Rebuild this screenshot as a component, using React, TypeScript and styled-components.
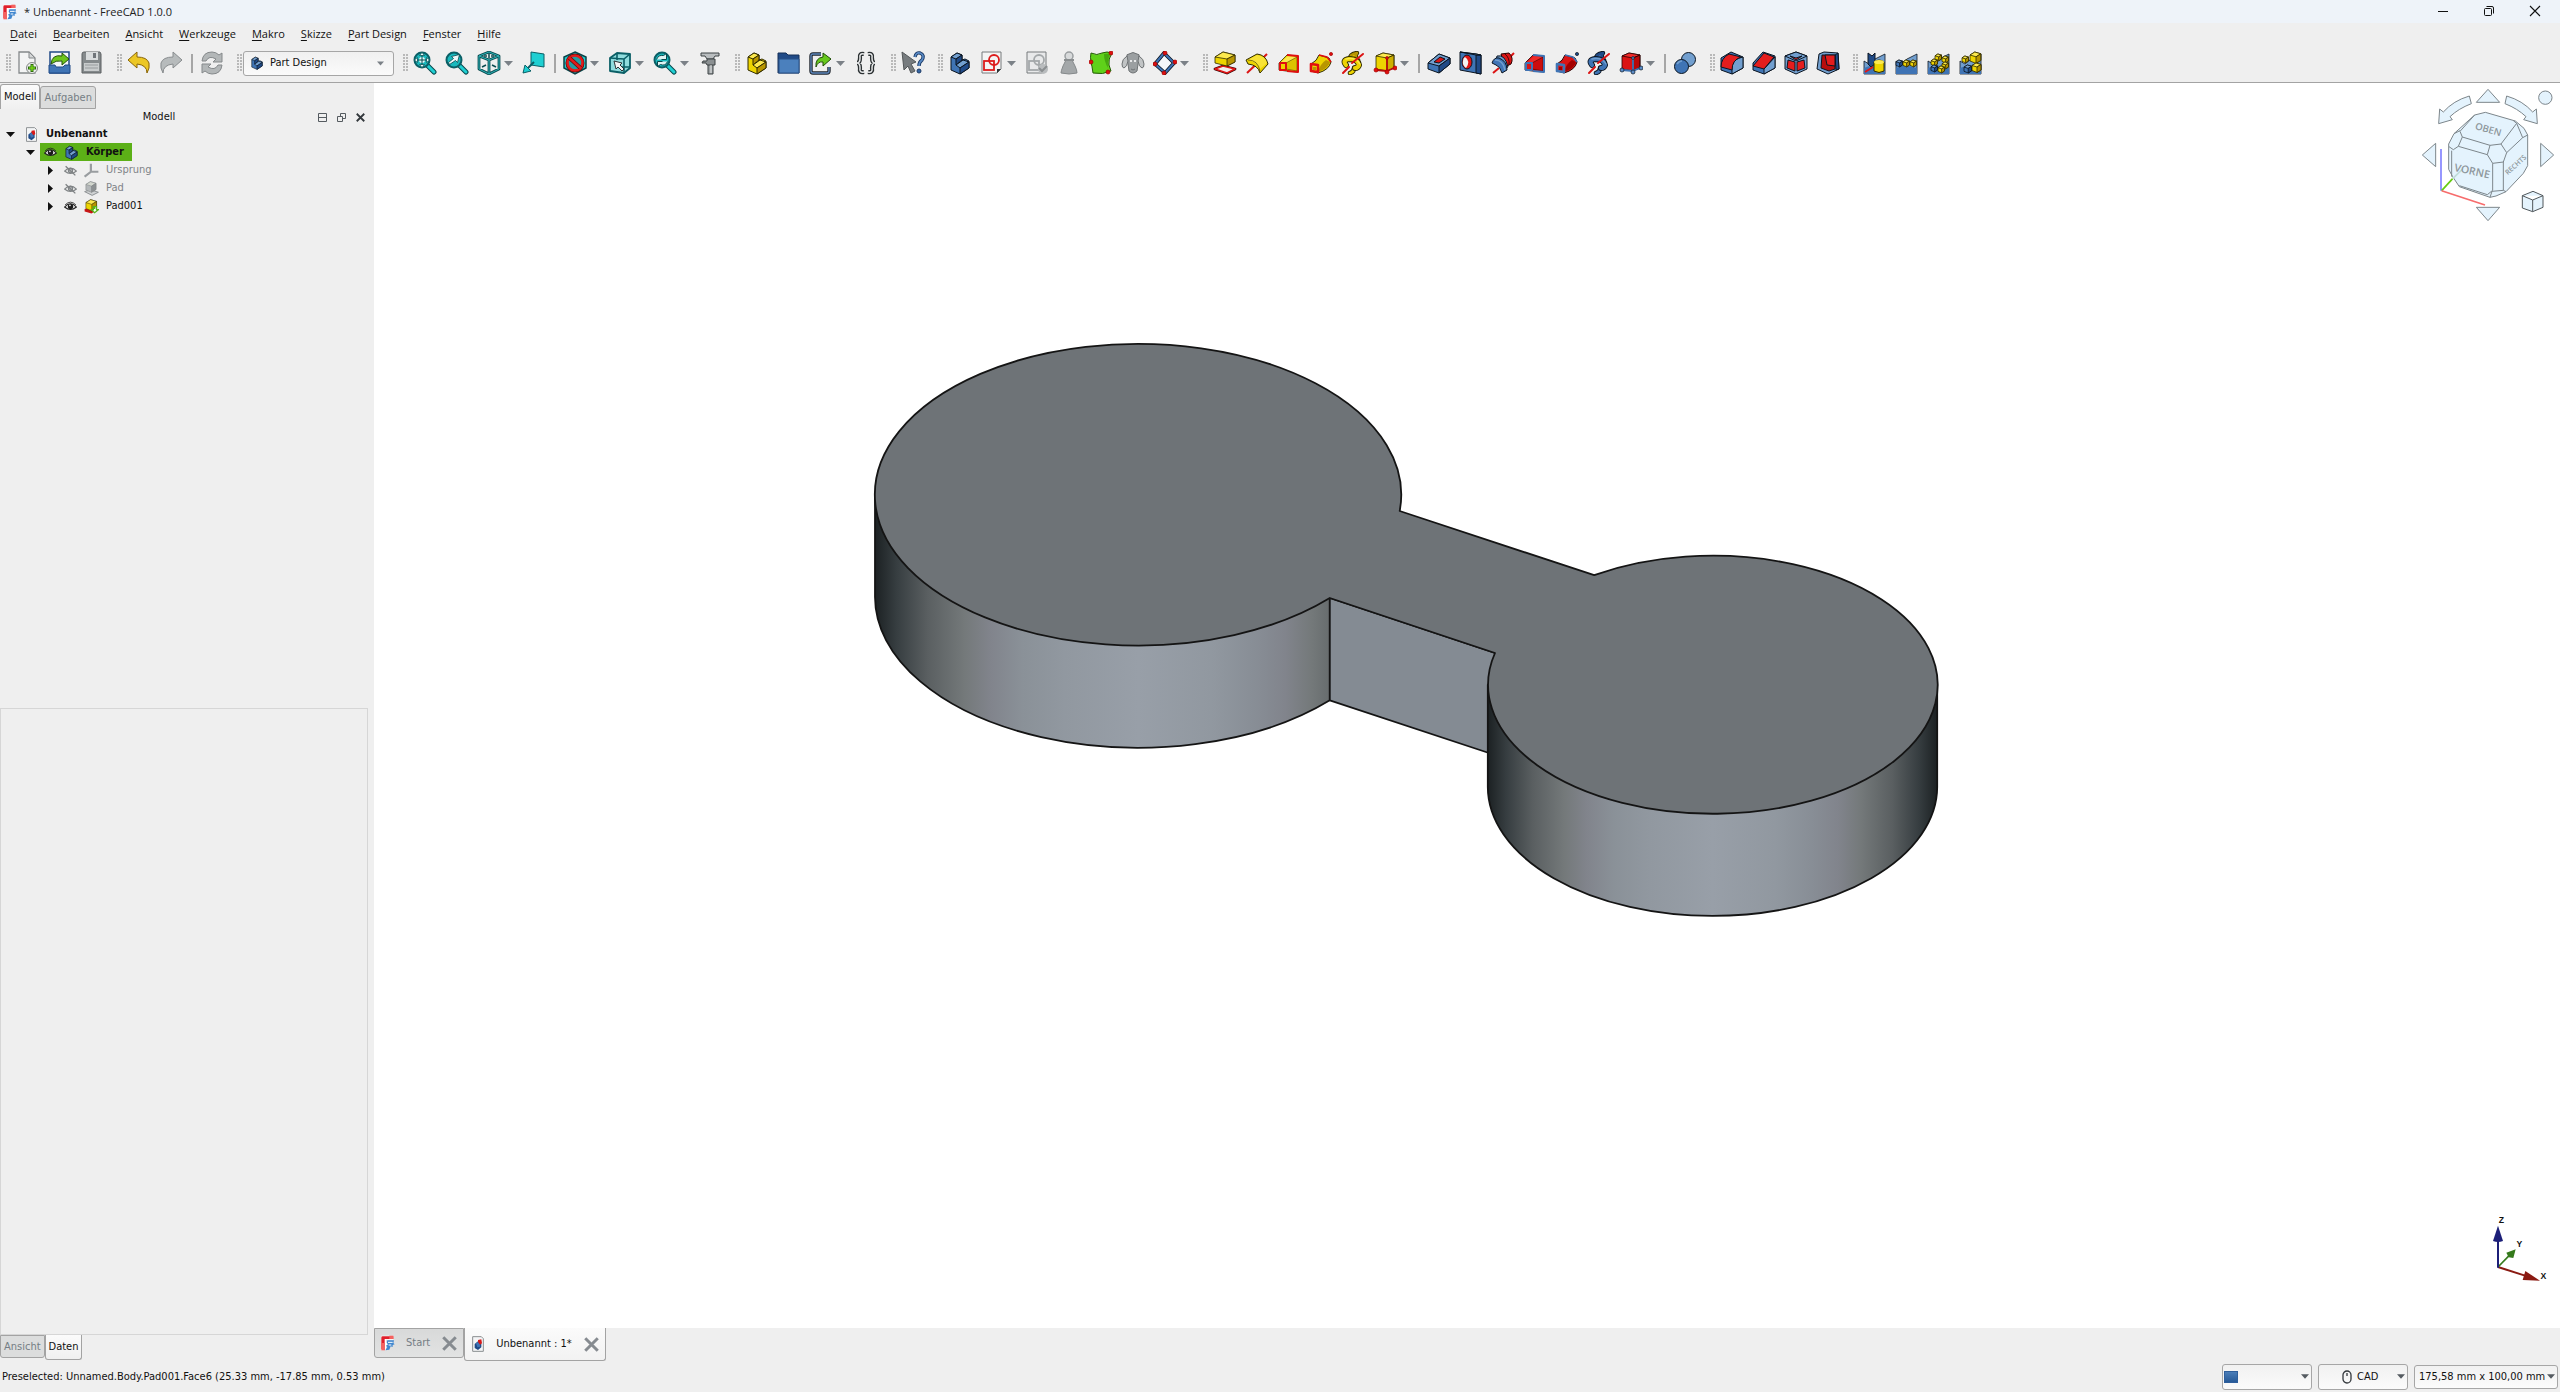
import React from 'react';
import styled, { createGlobalStyle } from 'styled-components';

const UI_FONT = '"DejaVu Sans Condensed", "Liberation Sans", sans-serif';
const SYSTEM_FONT = '"Open Sans", "Noto Sans", sans-serif';

const GlobalStyle = createGlobalStyle`
  * { box-sizing: border-box; }
  body { margin: 0; background: #efefef; color: #111; font: 11px/16px ${UI_FONT}; }
  button, select { font: inherit; color: inherit; margin: 0; padding: 0; border: 0; background: none; }
  svg { display: block; flex: none; }
`;

/* ---------- shared palette for the icon set ---------- */
const Y = { l: '#fce94f', m: '#edd400', d: '#b89600', s: '#302b00' };
const B = { l: '#729fcf', m: '#3f74b5', d: '#204a87', s: '#0b1521' };
const R = { l: '#ef2929', m: '#dc1414', d: '#a40000', s: '#280000' };
const G = { l: '#d3d7cf', m: '#b4b8ba', d: '#8d9193', s: '#7d8183' };
const TEAL = '#1fcfd2';
const TEAL_DARK = '#0b5f66';
type Tone = typeof Y;

/* ---------- icon fragments ---------- */
const Box = ({ t, x = 0, y = 0, k = 1 }: { t: Tone; x?: number; y?: number; k?: number }) => (
  <g transform={`translate(${x} ${y}) scale(${k})`} stroke={t.s} strokeLinejoin="round" strokeWidth={0.8 / k}>
    <path d="M0 5 L8 0 L18 3 V14 L10 19 L0 15Z" fill={t.m} />
    <path d="M0 5 L8 0 L18 3 L10 8Z" fill={t.l} />
    <path d="M10 8 L18 3 V14 L10 19Z" fill={t.d} />
  </g>
);

const Steps = ({ t }: { t: Tone }) => (
  <g stroke={t.s} strokeLinejoin="round" strokeWidth="1">
    <path d="M3 6 L9 2 L14 4 V9 L17 8 L21 10 V17 L12 23 L3 19Z" fill={t.m} />
    <path d="M3 6 L9 2 L14 4 L8 8Z" fill={t.l} />
    <path d="M8 8 L14 4 V9 L8 14Z" fill={t.d} />
    <path d="M8 14 L15 9 L21 11 L12 17Z" fill={t.l} />
    <path d="M12 17 L21 11 V17 L12 23Z" fill={t.d} />
  </g>
);

const Lens = ({ children }: { children?: React.ReactNode }) => (
  <g>
    <path d="M14 14 L21 21" stroke="#07474c" strokeWidth="5" strokeLinecap="round" />
    <path d="M14 14 L21 21" stroke={TEAL} strokeWidth="3" strokeLinecap="round" />
    <circle cx="9" cy="9" r="7.5" fill="#18b9bd" stroke={TEAL_DARK} strokeWidth="2" />
    <g transform="translate(-0.5 -0.5)">{children}</g>
  </g>
);

const Dot = ({ x, y, c = '#e00f0f', r = 1.6 }: { x: number; y: number; c?: string; r?: number }) => (
  <circle cx={x} cy={y} r={r} fill={c} stroke={c === '#e00f0f' ? '#a40000' : '#0b1521'} strokeWidth="0.7" />
);

const Loft = ({ t, e }: { t: Tone; e: string }) => (
  <g strokeLinejoin="round">
    <path d="M2 12 L10 4 L21 5 V21 L9 20 L2 19Z" fill={t.m} stroke={t.s} strokeWidth="0.8" />
    <path d="M3 12 L11 5 L20 6 L9 12Z" fill={t.l} />
    <path d="M9 12 L20 6 V20 L9 18Z" fill={t.d} fillOpacity="0.3" stroke={t.s} strokeWidth="0.5" />
    <path d="M10 4 L21 5 V21 L10 20" fill="none" stroke={e} strokeWidth="2" />
    <rect x="3" y="12" width="6" height="7" fill={t.m} stroke={e} strokeWidth="2" />
  </g>
);

const Pipe = ({ t, e }: { t: Tone; e: string }) => (
  <g strokeLinejoin="round">
    <path d="M2 13 Q8 10 10 4 L20 7 L22 11 Q20 19 9 22 L2 20Z" fill={t.m} stroke={t.s} />
    <path d="M9 21 Q11 13 17 9 L21 11 Q19 18 9 21Z" fill={t.d} />
    <path d="M10 4 L18 6 L22 11" fill="none" stroke={e} strokeWidth="1.6" />
    <path d="M2 13 L9 14 V21 L2 20Z" fill={t.m} stroke={e} strokeWidth="2.6" />
    <rect x="4" y="16" width="3" height="3" fill={t.d} />
    <Dot x={22} y={3} c={e === '#e00f0f' ? e : '#204a87'} />
  </g>
);

const Helix = ({ t }: { t: Tone }) => {
  const upper = 'M9 9 Q8 3 16 2 Q13 6 17 9';
  const ring = 'M5 14 Q1 9 8 8 Q17 8 18 14 Q17 17 14 17';
  const lower = 'M13 17 Q13 21 9 22';
  return (
    <g fill="none" strokeLinecap="round" strokeLinejoin="round">
      <path d={upper} stroke={t.s} strokeWidth="4.4" fill={t.s} />
      <path d={upper} stroke={t.d} strokeWidth="2.600" fill={t.m} />
      <path d={lower} stroke={t.s} strokeWidth="4.600" />
      <path d={lower} stroke={t.m} strokeWidth="2.800" />
      <path d={ring} stroke={t.s} strokeWidth="6" />
      <path d={ring} stroke={t.m} strokeWidth="4.200" />
      <path d="M5 8 Q15 6 19 13" stroke={t.l} strokeWidth="1.400" />
      <path d="M2 22 L8 16 M11 12 L22 3" stroke="#dc1414" strokeWidth="2" />
    </g>
  );
};

const Cylinder = () => (
  <g strokeLinejoin="round">
    <path d="M2 22 L22 3" stroke="#dc1414" strokeWidth="2" />
    <path d="M1 9 L12 3 Q21 4 23 13 L15 22 Q13 14 3 13Z" fill={Y.m} stroke={Y.s} />
    <path d="M3 9 L12 4 Q20 5 22 12 L15 18 Q12 11 3 9Z" fill={Y.l} fillOpacity="0.7" />
    <path d="M3 9 Q13 9 15 20" fill="none" stroke={Y.s} strokeWidth="0.6" />
  </g>
);

const Groove = () => (
  <g strokeLinejoin="round">
    <path d="M2 22 L8 17 M19 6 L23 2" stroke="#dc1414" strokeWidth="2" />
    <path d="M10 3 L18 2 Q23 7 20 13 L14 16Z" fill={R.m} stroke={R.s} />
    <path d="M14 3 Q19 7 18 14" fill="none" stroke={R.s} strokeWidth="0.8" />
    <path d="M6 5 Q14 3 17 16 L13 18 L5 9Z" fill={B.l} stroke={B.s} />
    <path d="M1 12 Q3 6 8 7 Q16 10 16 19 L11 22 Q9 15 5 14Z" fill={B.m} stroke={B.s} />
    <path d="M4 9 Q12 9 14 19" stroke={B.l} strokeWidth="1.500" fill="none" />
  </g>
);

const Primitive = ({ t, e, c }: { t: Tone; e: string; c: string }) => (
  <g strokeLinejoin="round">
    <g stroke={t.s} strokeWidth="0.8">
      <path d="M3 5 L10 2 L21 4 V17 L14 20 L3 18Z" fill={t.m} />
      <path d="M3 5 L10 2 L21 4 L14 7Z" fill={t.l} />
      <path d="M14 7 L21 4 V17 L14 20Z" fill={t.d} fillOpacity="0.6" />
    </g>
    <path d="M14 7 V20 L3 19 M14 20 L21 17" fill="none" stroke={e} strokeWidth="1.800" />
    <Dot x={14} y={7} c={c} r={1.4} /><Dot x={3} y={19} c={c} r={2} />
    <Dot x={14} y={21} c={c} r={2} /><Dot x={22} y={17} c={c} r={2} />
  </g>
);

const PatternBase = ({ children }: { children: React.ReactNode }) => (
  <g>
    <path d="M1 10 L6 13 L12 8 L22 3 V23 H1Z" fill={B.l} stroke={B.s} strokeWidth="0.800" />
    <path d="M1 17 L9 14 L22 17 V23 H1Z" fill={B.m} />
    {children}
  </g>
);

const Datum = () => (
  <g>
    <path d="M11 2 L21 12 L12 22 L2 13Z" fill="#f5f7fa" stroke={B.s} strokeWidth="3.600" />
    <path d="M11 2 L21 12 L12 22 L2 13Z" fill="none" stroke={B.m} strokeWidth="2" />
    <Dot x={12} y={2} r={2} /><Dot x={22} y={11} r={2} /><Dot x={11} y={22} r={2} /><Dot x={2} y={13} r={2} />
  </g>
);

const Sketch = ({ line, paper, extra }: { line: string; paper: string; extra?: React.ReactNode }) => (
  <g>
    <path d="M2 1 H21 V18 L17 22 H2Z" fill={paper} stroke="#777b7d" />
    <rect x="4" y="10" width="10" height="9" fill="none" stroke={line} strokeWidth="1.800" />
    <circle cx="14" cy="9" r="5" fill="none" stroke={line} strokeWidth="1.800" />
    {extra}
  </g>
);

const FreeCadMark = () => (
  <g>
    <path d="M2 1 H20 V7 H9 V11 H13 V16 H9 V23 H2Z" fill="#fff" />
    <path d="M2 21 V4 Q2 2 4 2 H20 V6 H7 V23Z" fill="#e0202c" />
    <path d="M2 12 H7 V23 H2Z" fill="#f4625f" />
    <path d="M14 1 H20 V6 H14Z" fill="#f4625f" />
    <path d="M11 8 H21 L20 12 L22 14 L19 15 L19 18 L16 17 L14 22 L8 23 L11 18 L9 16 L12 14 L10 12Z" fill="#3f86cf" />
    <path d="M12 11 H19 M13 15 H17" stroke="#fff" strokeWidth="1.500" />
  </g>
);

const DocMark = () => (
  <g>
    <path d="M4 1 H17 L20 4 V23 H4Z" fill="#f4f5f6" stroke="#8a8e90" strokeWidth="1.500" />
    <path d="M7 12 L12 8 L17 11 V17 L12 21 L7 18Z" fill={B.d} />
    <path d="M9 11 L12 9 L15 11 V16 L11 17Z" fill={B.m} />
    <path d="M12 6 L17 5 L18 11 L15 13 L12 9Z" fill="#d81919" />
  </g>
);

const bracesPath = 'M10 3 Q5 2 6 7 Q6 12 3 12 Q6 12 6 17 Q5 22 10 21 M14 3 Q19 2 18 7 Q18 12 21 12 Q18 12 18 17 Q19 22 14 21';
const questionPath = 'M14 6 Q15 1 19 2 Q24 4 21 9 Q18 11 18 15';

const glyphs: Record<string, React.ReactNode> = {
  logo: <FreeCadMark />,
  doc: <DocMark />,
  new: (
    <g>
      <path d="M3 1 H13 L19 7 V22 H3Z" fill="#f3f4f4" stroke="#85898b" strokeWidth="1.300" />
      <path d="M13 1 V7 H19Z" fill="#d5d7d8" stroke="#85898b" />
      <circle cx="16" cy="17" r="5.500" fill="#eceeec" stroke="#808583" />
      <path d="M16 13 V21 M12 17 H20" stroke="#2c6a10" strokeWidth="3" />
      <path d="M16 14 V20 M13 17 H19" stroke="#73d216" strokeWidth="1.500" />
    </g>
  ),
  open: (
    <g>
      <path d="M2 1 H21 V22 H2Z" fill="#f4f6f8" stroke={B.d} strokeWidth="1.500" />
      <path d="M1 14 H7 L8 16 H15 L17 14 H22 V22 H1Z" fill={B.m} stroke={B.d} />
      <path d="M3 13 Q4 3 14 5 V2 L21 8 L14 14 V10 Q8 9 3 13Z" fill="#6cc41c" stroke="#24520b" />
    </g>
  ),
  save: (
    <g>
      <path d="M2 3 Q2 1 4 1 H20 L21 3 V22 H2Z" fill="#858a8c" stroke="#5d6163" />
      <path d="M6 1 H18 V9 H6Z" fill="#d9dcdd" /><path d="M13 2 H16 V7 H13Z" fill="#70757a" />
      <path d="M4 12 H19 V20 H4Z" fill="#c9cccd" /><path d="M5 14 H18 M5 17 H18" stroke="#989c9e" />
    </g>
  ),
  undo: <path d="M1 9 L10 1 V6 Q20 6 22 12 Q23 17 20 22 Q20 14 10 13 V17Z" fill="#ecc725" stroke="#8a6508" strokeLinejoin="round" />,
  redo: <path d="M23 9 L14 1 V6 Q4 6 2 12 Q1 17 4 22 Q4 14 14 13 V17Z" fill="#b7bbbc" stroke="#888c8e" strokeLinejoin="round" />,
  refresh: (
    <g fill="#b3b7b8" stroke="#85898b" strokeLinejoin="round">
      <path d="M2 10 Q3 1 12 1 Q16 1 19 4 L22 2 V11 H13 L16 8 Q9 4 6 10Z" />
      <path d="M22 14 Q21 23 12 23 Q8 23 5 20 L2 22 V13 H11 L8 16 Q15 20 18 14Z" />
    </g>
  ),
  fit: (
    <Lens>
      <circle cx="9.500" cy="9.500" r="3" fill="#e6f9f9" />
      <path d="M9.500 2 L12 5 H7Z M9.500 17 L12 14 H7Z M2 9.500 L5 7 V12Z M17 9.500 L14 7 V12Z" fill="#e6f9f9" stroke="#07474c" strokeWidth="0.700" />
      <path d="M9.500 5 V14 M5 9.500 H14" stroke="#07474c" />
    </Lens>
  ),
  fitSel: <Lens><path d="M5 14 L4 12 L9 8 L7 6 L15 4 L13 12 L11 10Z" fill="#eef8f8" stroke="#07474c" strokeWidth="0.800" /></Lens>,
  sync: <Lens><path d="M4 9 Q6 4 11 5 L14 3 V9 H9 M15 11 Q13 16 8 14 L5 16 V11 H10" fill="#dff3f3" stroke="#07474c" strokeWidth="1" /></Lens>,
  iso: (
    <g fill="none" strokeLinejoin="round">
      <path d="M12 1 L22 5 V18 L12 23 L2 18 V5Z M2 5 L12 9 L22 5 M12 9 V23" stroke="#0b4b50" strokeWidth="2.800" />
      <path d="M12 1 L22 5 V18 L12 23 L2 18 V5Z M2 5 L12 9 L22 5 M12 9 V23" stroke="#2bb4b8" strokeWidth="1" />
      <path d="M12 2 V7 M5 16 L9 14 M19 16 L15 14 M7 5 L10 5 M14 5 L17 5" stroke="#0b4b50" strokeWidth="1.500" />
    </g>
  ),
  align: (
    <g>
      <path d="M9 1 L22 3 V16 L9 14Z" fill={TEAL} stroke={TEAL_DARK} />
      <path d="M12 11 L5 18" stroke="#0b5f66" strokeWidth="2" />
      <path d="M1 22 L3 14 L9 20Z" fill={TEAL} stroke={TEAL_DARK} />
    </g>
  ),
  drawStyle: (
    <g>
      <path d="M12 1 L23 6 V17 L12 23 L1 17 V6Z" fill={TEAL} stroke="#0a4247" strokeWidth="1.500" />
      <circle cx="12" cy="12" r="7.5" fill="none" stroke="#5e0808" strokeWidth="4" />
      <circle cx="12" cy="12" r="7.5" fill="#239ca1" stroke="#e01b1b" strokeWidth="2.600" />
      <path d="M6.500 7 L17.500 17" stroke="#5e0808" strokeWidth="4" />
      <path d="M6 6.500 L18 17.500" stroke="#e01b1b" strokeWidth="2.600" />
    </g>
  ),
  selBox: (
    <g strokeLinejoin="round">
      <path d="M2 7 L9 2 L22 3 V17 L16 22 L2 20Z" fill="#8fdcdd" stroke={TEAL_DARK} strokeWidth="1.800" />
      <path d="M2 7 L16 8 L22 3 M16 8 V22 M9 2 V9 M9 16 L22 16" fill="none" stroke={TEAL_DARK} strokeWidth="1.600" />
      <path d="M6 10 L14 12 L12 14 L16 18 L14 20 L10 16 L8 18Z" fill="#f2f4f4" stroke="#2e3436" />
    </g>
  ),
  caliper: (
    <g stroke="#3d4244" strokeLinejoin="round">
      <path d="M10 5 H15 V23 H10Z" fill="#9ba0a2" />
      <path d="M3 2 H21 V5 H17 L15 8 H9 L7 5 H3Z" fill="#b9bdbf" />
      <path d="M4 12 L5 10 H9 V8 H17 V14 H9 L8 12Z" fill="#8b9092" />
      <path d="M13 14 V22" stroke="#e4e6e7" />
    </g>
  ),
  part: <Steps t={Y} />,
  folder: (
    <g>
      <path d="M1 2 H9 L11 4 H22 V22 H1Z" fill={B.d} stroke="#152f57" />
      <path d="M2 8 H22 V22 H2Z" fill="#4b80bd" stroke="#295187" />
    </g>
  ),
  link: (
    <g>
      <path d="M12 3 H4 Q2 3 2 5 V20 Q2 22 4 22 H18 Q20 22 20 20 V16" fill="none" stroke="#1d232b" strokeWidth="3.400" />
      <path d="M12 3 H4 Q2 3 2 5 V20 Q2 22 4 22 H18 Q20 22 20 20 V16" fill="none" stroke="#5c86ba" strokeWidth="1.400" />
      <path d="M7 16 Q6 7 14 6 V2 L22 8 L14 15 V11 Q9 10 7 16Z" fill="#66c81d" stroke="#1f4d08" />
    </g>
  ),
  braces: (
    <g fill="none">
      <path d={bracesPath} stroke="#2b3032" strokeWidth="4.200" />
      <path d={bracesPath} stroke="#e6e8e9" strokeWidth="1.500" />
    </g>
  ),
  whats: (
    <g>
      <path d="M1 1 L15 11 L10 13 L14 20 L10 22 L7 15 L3 19Z" fill="#777c7f" stroke="#54585a" />
      <path d={questionPath} fill="none" stroke="#1c3a66" strokeWidth="3.400" />
      <path d={questionPath} fill="none" stroke="#5a8bc6" strokeWidth="1.600" />
      <circle cx="18" cy="20" r="2" fill="#3465a4" stroke="#1c3a66" />
    </g>
  ),
  body: <Steps t={B} />,
  sketch: <Sketch line="#dd1b1b" paper="#f4f4f4" extra={<path d="M21 18 H17 V22Z" fill="#2e3436" />} />,
  validate: (
    <Sketch line="#a4a8aa" paper="#e8e9ea" extra={<g><circle cx="18" cy="18" r="5" fill="#b9bcbe" /><path d="M14 17 L17 20 L22 15" fill="none" stroke="#8b8f91" strokeWidth="2" /></g>} />
  ),
  map: (
    <g>
      <path d="M9 9 L6 15 Q4 20 4 22 Q12 24 20 22 Q20 19 18 15 L15 9Z" fill="#a3a7a9" stroke="#85898b" />
      <circle cx="12" cy="5" r="4" fill="#d8dadb" stroke="#9a9ea0" strokeWidth="1.500" />
      <path d="M7 9 H17" stroke="#8a8e90" strokeWidth="2" />
    </g>
  ),
  shape: (
    <g>
      <path d="M2 2 Q8 5 13 2 Q18 0 23 2 Q19 8 20 14 L22 20 Q14 24 4 22 Q3 15 2 11 Q1 6 2 2Z" fill="#5fd11a" stroke="#245c06" />
      <path d="M15 3 Q21 2 21 4 Q18 8 19 17 Q15 10 15 3Z" fill="#45a80f" />
      <Dot x={22} y={2} r={2} /><Dot x={2} y={11} r={2} /><Dot x={19} y={21} r={2} />
    </g>
  ),
  clone: (
    <g fill="#9b9fa1" stroke="#6f7375">
      <path d="M6 6 Q5 3 8 3 Q12 0 16 3 Q19 3 18 6 L16 20 Q12 24 8 20Z" />
      <path d="M6 5 Q1 8 1 13 Q1 17 3 17 Q6 16 7 10Z M18 5 Q23 8 23 13 Q23 17 21 17 Q18 16 17 10Z" fill="#c1c4c5" />
      <path d="M9 10 h2 M13 10 h2" stroke="#fff" strokeWidth="1.500" /><path d="M10 18 Q12 20 14 18" fill="none" />
    </g>
  ),
  datum: <Datum />,
  pad: (
    <g strokeLinejoin="round">
      <path d="M2 18 L10 15 L22 18 L14 22Z" fill="none" stroke="#280000" strokeWidth="2.800" />
      <path d="M2 18 L10 15 L22 18 L14 22Z" fill="#efefef" stroke="#e01515" strokeWidth="1.600" />
      <g stroke={Y.s} strokeWidth="0.800">
        <path d="M2 6 L10 1 L22 4 V11 L14 15 L2 12Z" fill={Y.m} />
        <path d="M2 6 L10 1 L22 4 L14 8Z" fill={Y.l} /><path d="M14 8 L22 4 V11 L14 15Z" fill={Y.d} />
      </g>
    </g>
  ),
  revolution: <Cylinder />,
  loft: <Loft t={Y} e="#e00f0f" />,
  pipe: <Pipe t={Y} e="#e00f0f" />,
  helix: <Helix t={Y} />,
  primitive: <Primitive t={Y} e="#b80d0d" c="#e00f0f" />,
  pocket: (
    <g stroke={B.s} strokeLinejoin="round">
      <path d="M1 12 L12 3 L23 7 V13 L12 22 L1 18Z" fill={B.m} />
      <path d="M1 12 L12 3 L23 7 L12 15Z" fill={B.l} /><path d="M12 15 L23 7 V13 L12 22Z" fill={B.d} />
      <path d="M7 11 L13 6 L18 8 L12 12Z" fill="#d81515" />
    </g>
  ),
  hole: (
    <g stroke={B.s} strokeLinejoin="round">
      <path d="M1 1 L17 3 L22 4 V23 L17 22 L1 19Z" fill={B.m} /><path d="M17 4 L22 4 V23 L17 22Z" fill={B.d} />
      <path d="M1 1 L17 3 L22 4 L17 4Z" fill={B.l} />
      <ellipse cx="8" cy="11" rx="5" ry="7" fill="#e01515" /><path d="M6 6 Q12 10 7 17 Q3 14 4 10 Q4 7 6 6Z" fill="#f2f2f2" stroke="none" />
    </g>
  ),
  groove: <Groove />,
  subLoft: <Loft t={R} e="#3f74b5" />,
  subPipe: <Pipe t={R} e="#3f74b5" />,
  subHelix: <Helix t={B} />,
  subPrimitive: <Primitive t={R} e="#3f74b5" c="#5a8bc6" />,
  boolean: (
    <g stroke={B.s}>
      <circle cx="15.500" cy="8.500" r="7" fill={B.l} /><circle cx="8.500" cy="15.500" r="7" fill={B.m} />
      <path d="M4 13 Q6 10 9 10" stroke={B.l} strokeWidth="1.500" fill="none" />
    </g>
  ),
  fillet: (
    <g stroke={B.s} strokeLinejoin="round">
      <path d="M1 7 L11 1 L23 6 V17 L12 23 L1 19Z" fill={B.m} /><path d="M12 23 V15 Q13 8 23 6 V17Z" fill={B.l} />
      <path d="M1 16 Q1 7 9 3 L21 6 Q12 9 12 19Z" fill="#e41d1d" />
    </g>
  ),
  chamfer: (
    <g stroke={B.s} strokeLinejoin="round">
      <path d="M1 12 L11 1 L23 5 V17 L12 23 L1 19Z" fill={B.m} /><path d="M12 23 V18 L23 6 V17Z" fill={B.l} />
      <path d="M1 15 L12 2 L22 6 L12 18Z" fill="#e41d1d" />
    </g>
  ),
  draft: (
    <g stroke={B.s} strokeLinejoin="round">
      <path d="M1 5 L12 1 L23 5 V18 L12 23 L1 18Z" fill={B.l} /><path d="M1 5 L12 1 L23 5 L12 10Z" fill={B.l} />
      <path d="M4 9 L11 11 V20 L3 17Z M13 11 L20 9 L21 17 L13 20Z M6 5 L12 7 L18 5 L12 9Z" fill="#e41d1d" />
    </g>
  ),
  thickness: (
    <g stroke={B.s} strokeLinejoin="round">
      <path d="M3 3 L8 1 L22 2 L23 18 L12 23 L1 18Z" fill={B.l} /><path d="M19 4 L22 2 L23 18 L20 19Z" fill={B.d} />
      <path d="M6 4 L19 4 V18 L13 20 L5 17Z" fill="#b80d0d" /><path d="M9 4 L19 4 V15 L11 14Z" fill="#e41d1d" />
    </g>
  ),
  mirror: (
    <PatternBase>
      <path d="M5 2 L9 5 L12 2 V13 L8 16 L5 13Z" fill={B.d} stroke={B.s} /><path d="M2 21 L10 16" stroke="#e01515" strokeWidth="2" />
      <path d="M11 11 Q16 7 21 11 V20 Q16 23 11 20Z" fill={Y.m} stroke={Y.s} /><ellipse cx="16" cy="11" rx="5" ry="2" fill={Y.l} />
    </PatternBase>
  ),
  linear: (
    <PatternBase><Box t={B} x={1} y={9} k={0.36} /><Box t={Y} x={8} y={9} k={0.36} /><Box t={Y} x={15} y={9} k={0.36} /></PatternBase>
  ),
  polar: (
    <PatternBase>
      <Box t={Y} x={8} y={3} k={0.36} /><Box t={Y} x={15} y={5} k={0.36} /><Box t={Y} x={4} y={8} k={0.36} />
      <Box t={Y} x={15} y={11} k={0.36} /><Box t={B} x={4} y={14} k={0.36} /><Box t={Y} x={11} y={15} k={0.36} />
    </PatternBase>
  ),
  multi: (
    <PatternBase><Box t={Y} x={11} y={1} k={0.6} /><Box t={Y} x={3} y={5} k={0.36} /><Box t={B} x={5} y={14} k={0.42} /><Box t={Y} x={13} y={12} k={0.5} /></PatternBase>
  ),
  eye: (
    <g>
      <path d="M1 13 Q12 1 23 13 Q12 22 1 13Z" fill="#f2f2f2" stroke="#222" strokeWidth="2" />
      <circle cx="12" cy="12" r="5" fill="#1b1b1b" /><circle cx="11" cy="10" r="1.500" fill="#fff" />
      <path d="M2 9 Q12 -1 22 9" fill="none" stroke="#222" strokeWidth="1.500" />
    </g>
  ),
  eyeOff: (
    <g fill="none" stroke="#7f8385" strokeWidth="2">
      <path d="M1 13 Q12 2 23 13 Q12 22 1 13Z" /><circle cx="12" cy="12" r="4" fill="#b0b3b5" /><path d="M3 4 L21 21" strokeWidth="2.500" />
    </g>
  ),
  origin: <path d="M11 1 V14 L1 22 M11 14 H23" fill="none" stroke="#999da0" strokeWidth="3.500" />,
  padOff: (
    <g><path d="M1 17 L10 14 L23 18 L13 23Z" fill="#cfd2d3" stroke="#8b8f91" strokeWidth="1.500" /><Box t={G} x={3} y={1} k={0.9} /></g>
  ),
  padTip: (
    <g>
      <path d="M1 16 L10 14 L20 18 L12 23 L1 20Z" fill="#c81616" /><Box t={Y} x={3} y={1} k={0.95} />
      <path d="M17 11 V16 M17 22 L12 17 H15 V12 H20 V17 H23Z" fill="#f4fff0" stroke="#55b41a" strokeWidth="2" />
    </g>
  ),
};

const Icon = ({ name, size = 24 }: { name: string; size?: number }) => (
  <svg width={size} height={size} viewBox="0 0 24 24" aria-hidden="true">{glyphs[name]}</svg>
);

const Caret = ({ color = '#7b8187', w = 9 }: { color?: string; w?: number }) => (
  <svg width={w} height="5" viewBox="0 0 9 5" aria-hidden="true"><path d="M0 0 H9 L4.500 5Z" fill={color} /></svg>
);

/* ---------- window frame ---------- */
const Window = styled.div`display: flex; flex-direction: column; height: 100vh; overflow: hidden;`;

const TitleBar = styled.header`
  display: flex; align-items: center; gap: 6px; height: 23px; padding: 0 2px;
  background: #eef3f9; font: 11px/16px ${SYSTEM_FONT}; color: #222;
`;
const WindowButtons = styled.div`display: flex; height: 100%; margin-left: auto;`;
const WindowButton = styled.button`display: grid; place-items: center; width: 46px; padding-bottom: 2px;`;

const MenuBar = styled.nav`display: flex; align-items: center; height: 21px; padding-left: 2px; font: 11px/16px ${SYSTEM_FONT};`;
const MenuItem = styled.button`padding: 0 8px;`;
const Mnemonic = styled.u`text-underline-offset: 2px;`;

const ToolRow = styled.div`
  display: flex; align-items: center; height: 39px; border-bottom: 1px solid #a3a3a3;
  & > :first-child { margin-left: -3px; }
`;
const ToolGroup = styled.div`display: flex; align-items: center;`;
const Grip = styled.span`
  width: 6px; height: 18px; margin: 0 0 0 9px;
  background-image: radial-gradient(circle at 1px 1px, #b9b9b9 1px, transparent 1px); background-size: 3px 3px;
`;
const ToolButton = styled.button<{ $menu?: boolean }>`
  display: flex; align-items: center; gap: 3px; width: ${(p) => (p.$menu ? 45 : 32)}px; height: 32px; padding-left: 4px;
`;
const Divider = styled.span`width: 2px; height: 19px; margin: 0 3px 0 4px; background: #a6a6a6;`;

const WorkbenchField = styled.label`
  display: flex; align-items: center; width: 151px; height: 25px; padding: 0 9px 0 6px;
  border: 1px solid #a6a6a6; border-radius: 3px; background: linear-gradient(#f0f0f0, #fbfbfb);
`;
const WorkbenchSelect = styled.select`
  flex: 1; min-width: 0; padding-left: 6px; appearance: none; outline: none;
`;

/* ---------- body ---------- */
const Workspace = styled.main`display: grid; grid-template-columns: 374px minmax(0, 1fr); flex: 1; min-height: 0;`;
const Dock = styled.aside`display: flex; flex-direction: column; min-height: 0;`;
const TabStrip = styled.div<{ $bottom?: boolean }>`
  display: flex; align-items: ${(p) => (p.$bottom ? 'flex-start' : 'flex-end')}; height: 26px;
`;
const DockTab = styled.button<{ $active?: boolean; $bottom?: boolean }>`
  height: ${(p) => (p.$active ? 25 : 23)}px; padding: 0 3px;
  border: 1px solid #a3a3a3;
  border-${(p) => (p.$bottom ? 'top' : 'bottom')}-width: ${(p) => (p.$active ? 0 : 1)}px;
  border-radius: ${(p) => (p.$bottom ? '0 0 3px 3px' : '3px 3px 0 0')};
  background: ${(p) => (p.$active ? 'linear-gradient(#fbfbfb, #f0f0f0)' : '#dcdddd')};
  color: ${(p) => (p.$active ? '#111' : '#757d84')};
`;
const DockTitle = styled.div`
  display: grid; grid-template-columns: 1fr auto; align-items: center; height: 16px; padding-right: 9px; text-align: center;
`;
const DockButtons = styled.div`display: flex; gap: 10px;`;
const DockButton = styled.button`display: block; line-height: 0;`;

const Tree = styled.ul`flex: 14 1 0; min-height: 0; margin: 0; padding: 0; list-style: none;`;
const TreeRow = styled.li<{ $depth: number; $strong?: boolean; $dim?: boolean }>`
  display: flex; align-items: center; height: 18px; padding-left: ${(p) => 5 + p.$depth * 20}px;
  font-weight: ${(p) => (p.$strong ? 700 : 400)}; color: ${(p) => (p.$dim ? '#7f8488' : '#111')};
`;
const Expander = styled.button`display: grid; place-items: center; width: 11px; height: 18px; margin-right: 4px;`;
const TreeLabel = styled.span<{ $on?: boolean }>`
  display: flex; align-items: center; gap: 7px; height: 18px; padding: 0 8px 0 4px;
  background: ${(p) => (p.$on ? '#5cb017' : 'transparent')};
`;
const Properties = styled.section`flex: 15 1 0; min-height: 0; margin-right: 6px; border: 1px solid #d6d6d6;`;

const Stage = styled.section`display: flex; flex-direction: column; min-width: 0; min-height: 0;`;
const Canvas = styled.div`position: relative; flex: 1; min-height: 0; overflow: hidden; background: #fff;`;
const Scene = styled.svg`width: 100%; height: 100%;`;
const NavCube = styled.svg`position: absolute; top: 0; right: 0;`;
const AxisCross = styled.svg`position: absolute; right: 0; bottom: 34px;`;

const DocTabs = styled.div`display: flex; align-items: flex-start; height: 33px;`;
const DocTab = styled.div<{ $active?: boolean }>`
  display: flex; align-items: center; height: ${(p) => (p.$active ? 33 : 30)}px; padding: 0 6px 0 5px;
  border: 1px solid #a3a3a3; border-top-width: ${(p) => (p.$active ? 0 : 1)}px; border-radius: 0 0 3px 3px;
  background: ${(p) => (p.$active ? 'linear-gradient(#fbfbfb, #f2f2f2)' : 'linear-gradient(#d8d9d9, #e2e3e3)')};
  color: ${(p) => (p.$active ? '#111' : '#757d84')};
`;
const DocTabName = styled.button`display: flex; align-items: center; gap: 10px; padding-right: 12px;`;

const StatusBar = styled.footer`display: flex; align-items: center; gap: 6px; height: 31px; padding: 0 2px;`;
const StatusText = styled.span`flex: 1;`;
const StatusButton = styled.button<{ $wide?: boolean }>`
  display: flex; align-items: center; justify-content: space-between;
  width: ${(p) => (p.$wide ? 144 : 90)}px; height: ${(p) => (p.$wide ? 24 : 26)}px; padding: 0 2px 0 ${(p) => (p.$wide ? 4 : 1)}px;
  border: 1px solid #a6a6a6; border-radius: 3px; background: linear-gradient(#f1f1f1, #fbfbfb);
`;
const Swatch = styled.span`width: 14px; height: 12px; background: linear-gradient(#4a7db8, #275a98); border: 1px solid #2f5f9c;`;
const StatusValue = styled.span`display: flex; align-items: center; gap: 5px; margin-left: 22px;`;

/* ---------- data ---------- */
const menus = ['Datei', 'Bearbeiten', 'Ansicht', 'Werkzeuge', 'Makro', 'Skizze', 'Part Design', 'Fenster', 'Hilfe'];

// "|" is a divider, a trailing "+" adds a drop-down arrow
const fileTools = [['new', 'open', 'save'], ['undo', 'redo', '|', 'refresh']];
const modelTools = [
  ['fit', 'fitSel', 'iso+', 'align', '|', 'drawStyle+', 'selBox+', 'sync+', 'caliper'],
  ['part', 'folder', 'link+', 'braces'],
  ['whats'],
  ['body', 'sketch+', 'validate', 'map', 'shape', 'clone', 'datum+'],
  ['pad', 'revolution', 'loft', 'pipe', 'helix', 'primitive+', '|', 'pocket', 'hole', 'groove', 'subLoft', 'subPipe', 'subHelix', 'subPrimitive+', '|', 'boolean'],
  ['fillet', 'chamfer', 'draft', 'thickness'],
  ['mirror', 'linear', 'polar', 'multi'],
];

const Tools = ({ items }: { items: string[] }) => (
  <ToolGroup role="toolbar">
    <Grip />
    {items.map((item, i) => {
      if (item === '|') return <Divider key={i} />;
      const menu = item.endsWith('+');
      const name = menu ? item.slice(0, -1) : item;
      return (
        <ToolButton key={i} $menu={menu} aria-label={name}>
          <Icon name={name} />
          {menu && <Caret />}
        </ToolButton>
      );
    })}
  </ToolGroup>
);

interface Node { label: string; depth: number; open?: boolean; eye?: string; icon: string; strong?: boolean; dim?: boolean; on?: boolean }
const nodes: Node[] = [
  { label: 'Unbenannt', depth: 0, open: true, icon: 'doc', strong: true },
  { label: 'Körper', depth: 1, open: true, eye: 'eye', icon: 'body', strong: true, on: true },
  { label: 'Ursprung', depth: 2, eye: 'eyeOff', icon: 'origin', dim: true },
  { label: 'Pad', depth: 2, eye: 'eyeOff', icon: 'padOff', dim: true },
  { label: 'Pad001', depth: 2, eye: 'eye', icon: 'padTip' },
];

const Cross = ({ size, color, w }: { size: number; color: string; w: number }) => (
  <svg width={size} height={size} viewBox="0 0 12 12" aria-hidden="true">
    <path d="M1 1 L11 11 M11 1 L1 11" stroke={color} strokeWidth={w} />
  </svg>
);

/* ---------- 3D view ---------- */
const shade: [number, string][] = [
  [0, '#1c2123'], [0.04, '#363d40'], [0.1, '#5a5f61'], [0.17, '#74797a'], [0.22, '#81848c'], [0.28, '#8a9198'],
  [0.36, '#9198a0'], [0.5, '#989fa8'], [0.64, '#9198a0'], [0.72, '#888e96'], [0.78, '#81848c'], [0.83, '#74797a'],
  [0.9, '#5a5f61'], [0.96, '#363d40'], [1, '#1c2123'],
];
const Shade = ({ id, x1, x2 }: { id: string; x1: number; x2: number }) => (
  <linearGradient id={id} gradientUnits="userSpaceOnUse" x1={x1} x2={x2} y1="0" y2="0">
    {shade.map(([o, c]) => <stop key={o} offset={o} stopColor={c} />)}
  </linearGradient>
);

const Model = () => (
  <Scene viewBox="374 83 2186 1245" role="img" aria-label="Pad001">
    <defs>
      <Shade id="sideLeft" x1={875} x2={1401} />
      <Shade id="sideRight" x1={1488} x2={1937} />
    </defs>
    <g stroke="#141414" strokeWidth="1.800" strokeLinejoin="round">
      <path d="M875 494.500 V597 A263.200 150.800 0 0 0 1329.800 700.300 V598Z" fill="url(#sideLeft)" />
      <path d="M1329.800 598 L1495 653 V755 L1329.800 700.300Z" fill="#848b93" />
      <path d="M1487.800 684.700 V787 A224.700 129 0 0 0 1937.200 787 V684.700Z" fill="url(#sideRight)" />
      <path
        d="M1399.700 511 A263.200 150.800 0 1 0 1329.800 598 L1495 653 A224.800 129 0 1 0 1594.200 575.200Z"
        fill="#6e7377"
      />
    </g>
  </Scene>
);

const Cube = () => (
  <NavCube width="160" height="147" viewBox="0 249 480 441" aria-label="Navigation">
    <g fill="#e4f3fd" stroke="#7d868b" strokeWidth="3" strokeLinejoin="round">
      <path d="M264 268 L299 307 H229Z M229 622 H299 L264 662Z M67 465 L107 430 V500Z M422 430 L461 465 L422 500Z" />
      <circle cx="436" cy="293" r="20" />
      <path d="M208 288 L214 311 Q175 326 150 350 L157 359 L116 371 L119 327 L130 336 Q160 302 208 288Z" />
      <path d="M320 288 L315 311 Q353 326 378 350 L371 359 L412 371 L409 327 L398 336 Q368 302 320 288Z" />
      <path d="M224 345 L256 337 L346 363 L372 385 L383 405 V497 L370 520 L318 575 L288 588 L270 592 L178 560 L158 530 L146 508 V432 L162 401Z" />
      <path d="M224 345 L180 394 L187 411 L270 436 L303 432 L350 370 L340 362" fill="none" />
      <path d="M162 401 L180 392 M187 411 L175 439 L160 449 L147 440 M175 439 L262 464 L270 436 M155 452 V530 M262 464 L278 490 V571 L262 584 L178 557" fill="none" />
      <path d="M303 432 L320 458 L310 486 L278 490 M320 458 L368 413 L350 370 M368 413 L383 405 M310 486 V571 L276 574 M310 571 L318 575 M276 574 L270 592" fill="none" />
      <path d="M367 587 L399 574 L429 587 V622 L398 635 L367 624Z M367 587 L398 600 L429 587 M398 600 V635" stroke="#50575b" />
    </g>
    <g fill="none" strokeWidth="5">
      <path d="M123 447 V572" stroke="#8282ff" /><path d="M125 572 L158 536" stroke="#66cc11" />
      <path d="M158 536 L188 507" stroke="#bfdcd8" /><path d="M125 572 L255 615" stroke="#f76c6c" />
    </g>
    <g fill="#8d969b" fontFamily="Open Sans, sans-serif" fontWeight="600" textAnchor="middle">
      <text transform="translate(262 398) rotate(16)" fontSize="29">OBEN</text>
      <text transform="translate(214 524) rotate(12)" fontSize="32">VORNE</text>
      <text transform="translate(352 500) rotate(-42)" fontSize="21">RECHTS</text>
    </g>
  </NavCube>
);

const Axes = () => (
  <AxisCross width="80" height="80" viewBox="840 40 240 240" aria-label="XYZ">
    <path d="M894 199 L975 225" stroke="#8a1a12" strokeWidth="6" /><path d="M1020 240 L976 211 L968 238Z" fill="#8a1a12" />
    <path d="M894 199 L928 164" stroke="#357a1c" strokeWidth="5" /><path d="M947 146 L919 156 L926 170 L940 172Z" fill="#357a1c" />
    <path d="M894 201 V118" stroke="#1c1f78" strokeWidth="6" /><path d="M894 75 L879 121 Q894 127 909 121Z" fill="#1c1f78" />
    <g fill="#111" fontFamily="Liberation Sans, sans-serif" fontWeight="700" fontSize="26" textAnchor="middle">
      <text x="904" y="68">Z</text><text x="958" y="139">Y</text><text x="1030" y="236">X</text>
    </g>
  </AxisCross>
);

export default function App() {
  return (
    <Window>
      <GlobalStyle />
      <TitleBar>
        <Icon name="logo" size={16} />
        <span>* Unbenannt - FreeCAD 1.0.0</span>
        <WindowButtons>
          <WindowButton aria-label="Minimieren"><svg width="10" height="10"><path d="M0 5.500 H10" stroke="#111" /></svg></WindowButton>
          <WindowButton aria-label="Wiederherstellen">
            <svg width="10" height="10" fill="none" stroke="#111"><rect x="0.500" y="2.500" width="7" height="7" rx="1" /><path d="M2.500 0.500 H8 Q9.500 0.500 9.500 2 V7.500" /></svg>
          </WindowButton>
          <WindowButton aria-label="Schließen"><Cross size={12} color="#111" w={1.1} /></WindowButton>
        </WindowButtons>
      </TitleBar>

      <MenuBar>
        {menus.map((m) => <MenuItem key={m}><Mnemonic>{m[0]}</Mnemonic>{m.slice(1)}</MenuItem>)}
      </MenuBar>

      <ToolRow>
        {fileTools.map((g, i) => <Tools key={i} items={g} />)}
        <ToolGroup>
          <Grip />
          <WorkbenchField>
            <Icon name="body" size={14} />
            <WorkbenchSelect aria-label="Arbeitsbereich"><option>Part Design</option></WorkbenchSelect>
            <Caret w={7} />
          </WorkbenchField>
        </ToolGroup>
        {modelTools.map((g, i) => <Tools key={i} items={g} />)}
      </ToolRow>

      <Workspace>
        <Dock>
          <TabStrip>
            <DockTab $active>Modell</DockTab>
            <DockTab>Aufgaben</DockTab>
          </TabStrip>
          <DockTitle>
            <span>Modell</span>
            <DockButtons>
              <DockButton aria-label="Überlagern"><svg width="9" height="9" fill="none" stroke="#555b60"><path d="M0.500 0.500 H8.500 V8.500 H0.500Z M0.500 4.500 H8.500" /></svg></DockButton>
              <DockButton aria-label="Abdocken"><svg width="9" height="9" fill="none" stroke="#555b60"><path d="M0.500 3.500 H5.500 V8.500 H0.500Z M3.500 3 V0.500 H8.500 V5.500 H6" /></svg></DockButton>
              <DockButton aria-label="Schließen"><Cross size={9} color="#33383c" w={2.4} /></DockButton>
            </DockButtons>
          </DockTitle>
          <Tree>
            {nodes.map((n) => (
              <TreeRow key={n.label} $depth={n.depth} $strong={n.strong} $dim={n.dim}>
                <Expander aria-label={n.label}>
                  <svg width="9" height="9" viewBox="0 0 9 9"><path d={n.open ? 'M0 2 H9 L4.500 7Z' : 'M2 0 L7 4.500 L2 9Z'} fill="#111" /></svg>
                </Expander>
                <TreeLabel $on={n.on}>
                  {n.eye && <Icon name={n.eye} size={13} />}
                  <Icon name={n.icon} size={15} />
                  <span>{n.label}</span>
                </TreeLabel>
              </TreeRow>
            ))}
          </Tree>
          <Properties aria-label="Daten" />
          <TabStrip $bottom>
            <DockTab $bottom>Ansicht</DockTab>
            <DockTab $bottom $active>Daten</DockTab>
          </TabStrip>
        </Dock>

        <Stage>
          <Canvas>
            <Model />
            <Cube />
            <Axes />
          </Canvas>
          <DocTabs>
            <DocTab>
              <DocTabName><Icon name="logo" size={16} />Start</DocTabName>
              <DockButton aria-label="Start schließen"><Cross size={15} color="#868b90" w={2.4} /></DockButton>
            </DocTab>
            <DocTab $active>
              <DocTabName><Icon name="doc" size={16} />Unbenannt : 1*</DocTabName>
              <DockButton aria-label="Unbenannt schließen"><Cross size={15} color="#868b90" w={2.4} /></DockButton>
            </DocTab>
          </DocTabs>
        </Stage>
      </Workspace>

      <StatusBar>
        <StatusText>Preselected: Unnamed.Body.Pad001.Face6 (25.33 mm, -17.85 mm, 0.53 mm)</StatusText>
        <StatusButton aria-label="Farbe"><Swatch /><Caret color="#555b61" w={8} /></StatusButton>
        <StatusButton>
          <StatusValue>
            <svg width="10" height="14" fill="none" stroke="#33383c" strokeWidth="1.300"><rect x="1" y="1" width="8" height="12" rx="4" /><path d="M5 3 V6" /></svg>
            CAD
          </StatusValue>
          <Caret color="#555b61" w={8} />
        </StatusButton>
        <StatusButton $wide>175,58 mm x 100,00 mm<Caret color="#555b61" w={8} /></StatusButton>
      </StatusBar>
    </Window>
  );
}
